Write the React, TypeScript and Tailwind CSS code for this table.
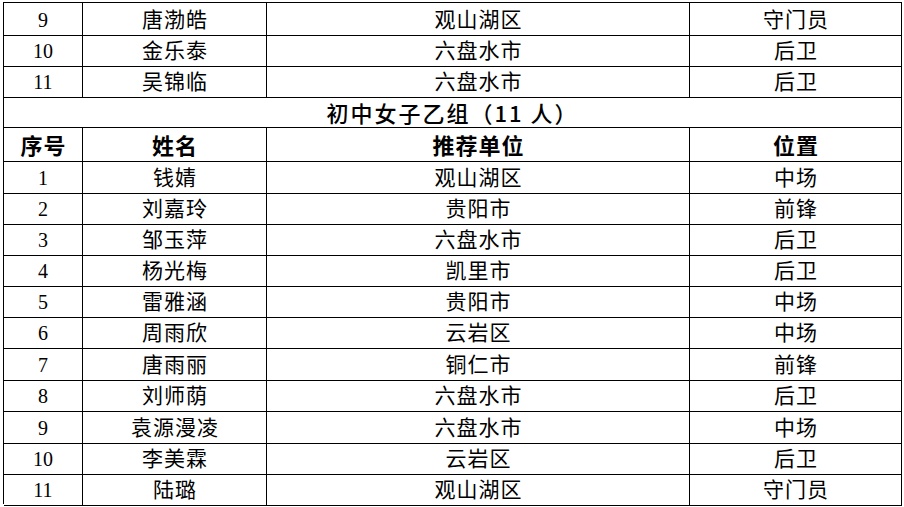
import React from "react";

type Row = [string, string, string, string];

const topRows: Row[] = [
  ["9", "唐渤皓", "观山湖区", "守门员"],
  ["10", "金乐泰", "六盘水市", "后卫"],
  ["11", "吴锦临", "六盘水市", "后卫"],
];
const topHeights = ["h-[31px]", "h-[31px]", "h-[32px]"];

const rows: Row[] = [
  ["1", "钱婧", "观山湖区", "中场"],
  ["2", "刘嘉玲", "贵阳市", "前锋"],
  ["3", "邹玉萍", "六盘水市", "后卫"],
  ["4", "杨光梅", "凯里市", "后卫"],
  ["5", "雷雅涵", "贵阳市", "中场"],
  ["6", "周雨欣", "云岩区", "中场"],
  ["7", "唐雨丽", "铜仁市", "前锋"],
  ["8", "刘师荫", "六盘水市", "后卫"],
  ["9", "袁源漫凌", "六盘水市", "中场"],
  ["10", "李美霖", "云岩区", "后卫"],
  ["11", "陆璐", "观山湖区", "守门员"],
];
const heights = [
  "h-[31px]", "h-[31px]", "h-[31px]", "h-[31px]", "h-[31px]", "h-[32px]",
  "h-[31px]", "h-[32px]", "h-[31px]", "h-[31px]", "h-[31px]",
];

const cjk = "font-['Noto_Sans_CJK_SC',sans-serif]";
const num = "font-['Liberation_Serif','Noto_Sans_CJK_SC',serif]";
const cell = "flex items-center justify-center border-r border-b border-black";
const cols = "grid grid-cols-[79px_184px_423px_212px]";
const body = `${cjk} text-[21px] tracking-[1px] pl-[1px]`;

function DataRow({ row, h }: { row: Row; h: string }) {
  return (
    <div className={`${cols} ${h}`}>
      <div className={`${cell} ${num} text-[20px] pt-[2px]`}>{row[0]}</div>
      <div className={`${cell} ${body}`}>{row[1]}</div>
      <div className={`${cell} ${body}`}>{row[2]}</div>
      <div className={`${cell} ${body}`}>{row[3]}</div>
    </div>
  );
}

export default function App() {
  return (
    <div className="w-[904px] h-[507px] bg-white text-black overflow-hidden pt-[2px] pl-[3px]">
      <div className="w-[899px] border-t border-l border-black">
        {topRows.map((r, i) => (
          <DataRow key={"t" + i} row={r} h={topHeights[i]} />
        ))}

        {/* group title */}
        <div className={`h-[31px] ${cell} ${cjk} text-[22px] font-medium tracking-[2px]`}>
          初中女子乙组（11 人）
        </div>

        {/* header */}
        <div className={`${cols} h-[33px]`}>
          {["序号", "姓名", "推荐单位", "位置"].map((t) => (
            <div key={t} className={`${cell} ${cjk} text-[22px] tracking-[1px] pl-[1px] font-bold`}>
              {t}
            </div>
          ))}
        </div>

        {rows.map((r, i) => (
          <DataRow key={i} row={r} h={heights[i]} />
        ))}
      </div>
    </div>
  );
}
